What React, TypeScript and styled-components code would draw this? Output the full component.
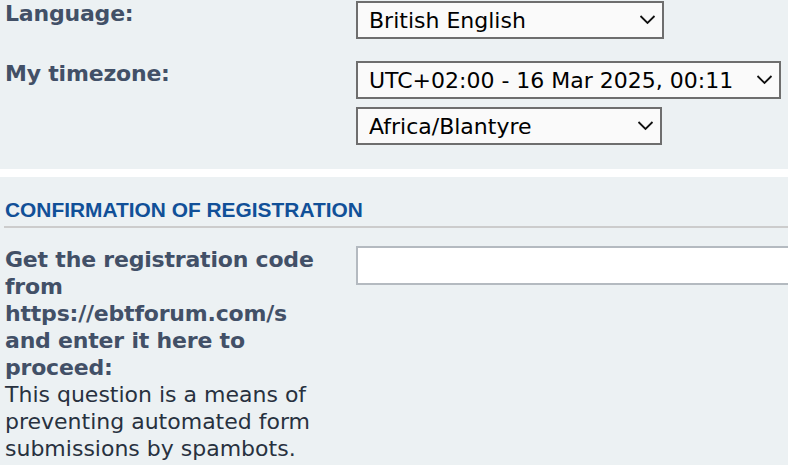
import React from "react";
import styled, { createGlobalStyle } from "styled-components";

const GlobalStyle = createGlobalStyle`
    html, body {
        margin: 0;
        padding: 0;
        background: #ffffff;
    }
    body {
        font-family: "DejaVu Sans", Verdana, sans-serif;
        font-size: 22px;
        color: #28313f;
        overflow: hidden;
    }
`;

const Panel = styled.div<{ $first?: boolean }>`
    background: #ecf1f3;
    padding: ${(p) => (p.$first ? "0 0 24px" : "21px 0 40px")};
    margin-top: ${(p) => (p.$first ? "0" : "8px")};
`;

const Heading = styled.h3`
    margin: 0 0 0 4px;
    padding: 0 0 4px 1px;
    border-bottom: 2px solid #cccccc;
    font-family: "Liberation Sans", Arial, sans-serif;
    font-size: 20.9px;
    line-height: 24px;
    font-weight: bold;
    color: #115098;
    text-transform: uppercase;
`;

const Row = styled.dl<{ $gap?: number }>`
    display: grid;
    grid-template-columns: 356px 1fr;
    margin: ${(p) => p.$gap ?? 0}px 0 0;
`;

const Label = styled.dt`
    padding-left: 5px;
    width: 318px;
    line-height: 27px;
    label {
        display: block;
        font-weight: bold;
        color: #425067;
        letter-spacing: -0.2px;
    }
    span {
        display: block;
        color: #28313f;
    }
`;

const Field = styled.dd<{ $top?: number }>`
    margin: 0;
    padding-top: ${(p) => p.$top ?? 0}px;
    display: flex;
    flex-direction: column;
    align-items: flex-start;
    gap: 8px;
    min-width: 0;
`;

const SelectWrap = styled.div`
    position: relative;
    display: block;
`;

const Select = styled.select<{ $width: number }>`
    appearance: none;
    -webkit-appearance: none;
    display: block;
    box-sizing: border-box;
    width: ${(p) => p.$width}px;
    height: 38px;
    margin: 0;
    padding: 0 30px 0 11px;
    border: 2px solid #6e6e6e;
    border-radius: 0;
    background: #fafafa;
    color: #000000;
    font-family: "DejaVu Sans", Verdana, sans-serif;
    font-size: 22px;
    outline: none;
`;

const Chevron = styled.svg`
    position: absolute;
    right: 8px;
    top: 50%;
    transform: translateY(-55%);
    pointer-events: none;
`;

const TextInput = styled.input`
    display: block;
    box-sizing: border-box;
    width: 460px;
    height: 39px;
    margin: 0;
    padding: 0 8px;
    border: 2px solid #b4bac0;
    border-radius: 0;
    background: #ffffff;
    font-family: "DejaVu Sans", Verdana, sans-serif;
    font-size: 22px;
    outline: none;
`;

const Dropdown: React.FC<{ width: number; value: string }> = ({ width, value }) => (
    <SelectWrap>
        <Select $width={width} defaultValue={value}>
            <option value={value}>{value}</option>
        </Select>
        <Chevron width="17" height="10" viewBox="0 0 17 10">
            <polyline points="1.5,1.5 8.5,8.5 15.5,1.5" fill="none" stroke="#111" strokeWidth="1.8" />
        </Chevron>
    </SelectWrap>
);

export default function App() {
    return (
        <>
            <GlobalStyle />
            <Panel $first>
                <Row>
                    <Label>
                        <label>Language:</label>
                    </Label>
                    <Field $top={1}>
                        <Dropdown width={308} value="British English" />
                    </Field>
                </Row>
                <Row $gap={21}>
                    <Label>
                        <label>My timezone:</label>
                    </Label>
                    <Field $top={1}>
                        <Dropdown width={425} value="UTC+02:00 - 16 Mar 2025, 00:11" />
                        <Dropdown width={306} value="Africa/Blantyre" />
                    </Field>
                </Row>
            </Panel>
            <Panel>
                <Heading>Confirmation of registration</Heading>
                <Row $gap={18}>
                    <Label>
                        <label>Get the registration code from https://ebtforum.com/s and enter it here to proceed:</label>
                        <span>This question is a means of preventing automated form submissions by spambots.</span>
                    </Label>
                    <Field>
                        <TextInput type="text" />
                    </Field>
                </Row>
            </Panel>
        </>
    );
}
